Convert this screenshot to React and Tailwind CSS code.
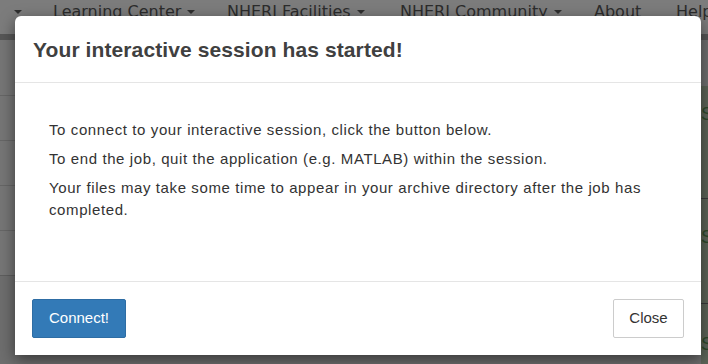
const navItems = [
  { label: '', caret: true, width: 'w-[53px] pl-[8px]' },
  { label: 'Learning Center', caret: true, width: 'w-[174px]' },
  { label: 'NHERI Facilities', caret: true, width: 'w-[173px]' },
  { label: 'NHERI Community', caret: true, width: 'w-[194px]' },
  { label: 'About', caret: false, width: 'w-[82px]' },
  { label: 'Help', caret: false, width: 'w-[60px]' },
];

const Caret = () => (
  <span className="ml-[6px] inline-block h-0 w-0 border-x-[4px] border-t-[4px] border-x-transparent border-t-[#2e2e2e] align-middle" />
);

const ModalDialog = () => (
  <div className="absolute left-[15px] top-[16px] w-[686px] rounded-t-[6px] bg-white shadow-[0_5px_15px_rgba(0,0,0,0.5)]">
    <div className="flex h-[67px] items-center border-b border-[#e5e5e5] px-[18px] pt-[2px]">
      <h4 className="font-['Liberation_Sans',Arial,sans-serif] text-[21px] font-bold tracking-[0.1px] text-[#404040]">
        Your interactive session has started!
      </h4>
    </div>
    <div className="px-[34px] pb-[53px] pt-[36px] font-['Liberation_Sans',Arial,sans-serif] text-[15px] leading-[22px] tracking-[0.6px] text-[#333]">
      <p className="mb-[7px]">To connect to your interactive session, click the button below.</p>
      <p className="mb-[7px]">To end the job, quit the application (e.g. MATLAB) within the session.</p>
      <p className="mb-[7px]">
        Your files may take some time to appear in your archive directory after the job has completed.
      </p>
    </div>
    <div className="flex items-center justify-between border-t border-[#e5e5e5] px-[17px] pb-[17px] pt-[17px] font-['Liberation_Sans',Arial,sans-serif] text-[15px]">
      <button className="h-[39px] w-[94px] rounded-[2px] border border-[#2e6da4] bg-[#337ab7] text-white">
        Connect!
      </button>
      <button className="h-[39px] w-[71px] rounded-[2px] border border-[#ccc] bg-white text-[#333]">
        Close
      </button>
    </div>
  </div>
);

export default function App() {
  return (
    <div className="relative h-[364px] w-[708px] overflow-hidden bg-[#6f6f6f]">
      <div className="flex h-[34px] items-start bg-[#7c7c7c] font-['DejaVu_Sans',sans-serif] text-[16px] leading-[30px] text-[#2c2c2c]">
        <div className="-mt-[3px] flex items-center">
          {navItems.map((item, i) => (
            <span key={i} className={`flex shrink-0 items-center ${item.width}`}>
              {item.label}
              {item.caret ? <Caret /> : null}
            </span>
          ))}
        </div>
      </div>
      <div className="h-[6px] bg-[#575757]" />
      <div className="flex h-[324px]">
        <div className="flex w-[15px] flex-col bg-[#767676]">
          <div className="h-[56px] border-b border-[#666]" />
          <div className="h-[45px] border-b border-[#666]" />
          <div className="h-[45px] border-b border-[#666]" />
          <div className="h-[45px] border-b border-[#666]" />
          <div className="h-[45px] border-b border-[#5e5e5e]" />
          <div className="flex-1 bg-[#6e6e6e]" />
        </div>
        <div className="flex-1" />
        <div className="flex w-[7px] flex-col bg-[#5d6558] font-['Liberation_Sans',sans-serif] text-[18px] leading-[40px] text-[#2f4a2a]">
          <div className="h-[47px] bg-[#707070]" />
          <div className="h-[116px] border-b border-[#3a3a3a] pt-[8px]">S</div>
          <div className="h-[108px] border-b border-[#3a3a3a] pt-[18px]">S</div>
          <div className="flex-1 pt-[20px]">S</div>
        </div>
      </div>
      <ModalDialog />
    </div>
  );
}
